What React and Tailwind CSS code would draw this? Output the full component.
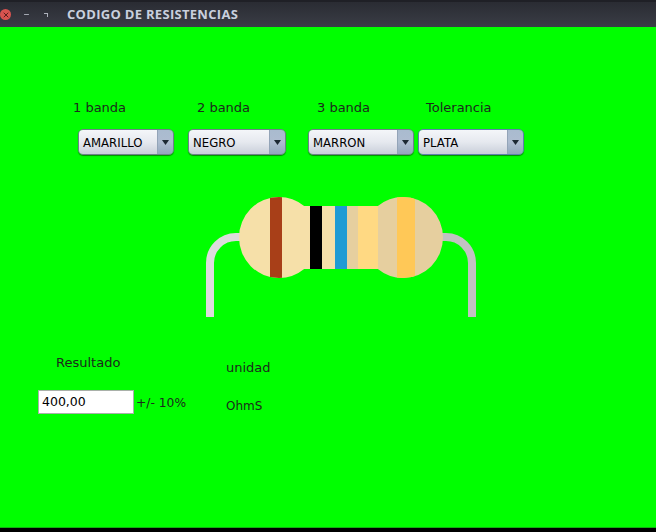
import { Minus, X } from 'lucide-react';

const font = 'font-["DejaVu_Sans",sans-serif]';

function Combo({ value, className, focused }) {
  return (
    <div className={`${className} h-[26px] flex rounded-[5px] border overflow-hidden shadow-[0_1px_1px_rgba(0,0,0,0.45)] ${focused ? 'border-[#5f7fae]' : 'border-[#6f7f8a]'}`}>
      <div className={`flex-1 flex items-center pl-1 pt-[3px] text-[11.7px] text-black bg-gradient-to-b from-[#f4f6f9] via-[#e6e9ef] to-[#c9cfda] ${font}`}>
        {value}
      </div>
      <div className="w-4 flex items-center justify-center bg-gradient-to-b from-[#a9bbcf] via-[#aebcd0] to-[#93a6bd] border-l border-[#93a4b8]">
        <svg width="7" height="5" viewBox="0 0 7 5"><path d="M0 0h7L3.5 5z" fill="#1c2833" /></svg>
      </div>
    </div>
  );
}

function Resistor() {
  return (
    <svg width="280" height="126" viewBox="0 0 280 126" className="block">
      <path d="M38 42 H31 A26 26 0 0 0 5 68 V122" fill="none" stroke="#dcdcdc" strokeWidth="8" />
      <path d="M236 42 H241 A26 26 0 0 1 267 68 V122" fill="none" stroke="#c2c2c2" strokeWidth="8" />
      <clipPath id="body">
        <ellipse cx="74" cy="42.5" rx="40" ry="40.5" />
        <ellipse cx="198" cy="42.5" rx="40" ry="40.5" />
        <rect x="94" y="11" width="84" height="63" />
      </clipPath>
      <g clipPath="url(#body)">
        <rect x="30" y="0" width="120" height="90" fill="#f6e0a9" />
        <rect x="65" y="0" width="12" height="90" fill="#a83f18" />
        <rect x="105" y="0" width="12" height="90" fill="#000000" />
        <rect x="130" y="0" width="12" height="90" fill="#1f9bd4" />
        <rect x="142" y="0" width="100" height="90" fill="#e6cf9f" />
        <rect x="153" y="0" width="20" height="90" fill="#ffd983" />
        <rect x="192" y="0" width="18" height="90" fill="#ffc857" />
      </g>
    </svg>
  );
}

export default function App() {
  return (
    <div className={`w-[656px] h-[532px] flex flex-col bg-black overflow-hidden ${font}`}>
      {/* barra de titulo */}
      <div className="h-[27px] flex items-center bg-gradient-to-b from-[#2a2c33] to-[#3a3d46] border-t-2 border-[#1f2026]">
        <div className="w-[11px] h-[11px] rounded-full bg-[#d9534f] flex items-center justify-center">
          <X size={8} strokeWidth={3} color="#5a1f1c" />
        </div>
        <Minus size={7} strokeWidth={3} color="#b4b8c2" className="ml-[12px]" />
        <div className="ml-[14px] w-[4px] h-[4px] border-t border-r border-[#aeb2bc]" />
        <span className='ml-[19px] text-[13px] font-bold text-[#c9cfdd] tracking-[0.3px] font-["Open_Sans",sans-serif]'>
          CODIGO DE RESISTENCIAS
        </span>
      </div>

      <div className="h-[500px] bg-[#00ff00] text-[13px] text-[#1c2a1c] flex flex-col">
        <div className="flex mt-[72px] h-[16px] items-center leading-none">
          <span className="ml-[73px] w-[124px]">1 banda</span>
          <span className="w-[120px]">2 banda</span>
          <span className="w-[109px]">3 banda</span>
          <span>Tolerancia</span>
        </div>

        <div className="flex mt-[14px]">
          <Combo value="AMARILLO" className="ml-[78px] w-[96px]" />
          <Combo value="NEGRO" className="ml-[14px] w-[98px]" />
          <Combo value="MARRON" className="ml-[22px] w-[106px]" />
          <Combo value="PLATA" className="ml-[4px] w-[106px]" focused />
        </div>

        <div className="ml-[205px] mt-[40px]">
          <Resistor />
        </div>

        <div className="flex mt-[33px]">
          <div className="ml-[38px] w-[188px] flex flex-col">
            <span className="ml-[18px] h-[16px] leading-none flex items-center">Resultado</span>
            <div className="flex items-center mt-[20px]">
              <div className="w-[96px] h-[24px] bg-white border border-[#a9b0a9] pl-[3px] flex items-center text-[12.5px] text-black">
                400,00
              </div>
              <span className="ml-[2px] mt-[2px] text-[12.3px]">+/- 10%</span>
            </div>
          </div>
          <div className="flex flex-col mt-[5px]">
            <span className="h-[16px] leading-none flex items-center">unidad</span>
            <span className="mt-[23px] h-[16px] leading-none flex items-center text-[12px]">OhmS</span>
          </div>
        </div>
      </div>

      <div className="h-px bg-[#12b012]" />
    </div>
  );
}
